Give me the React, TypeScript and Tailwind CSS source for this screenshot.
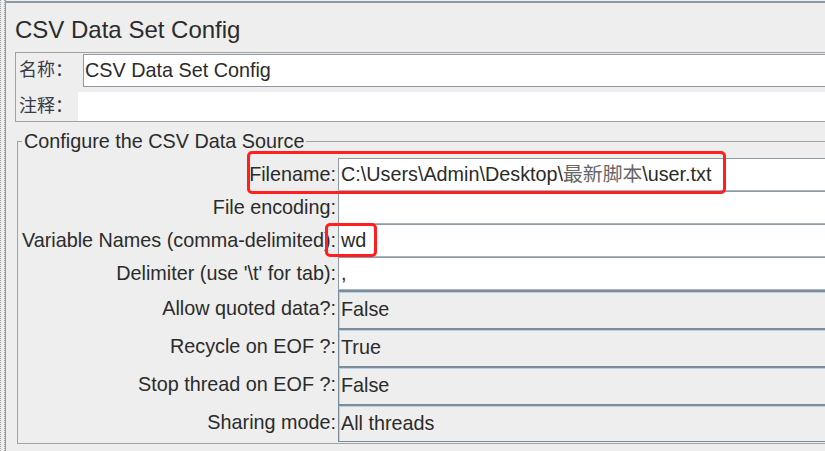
// CSV Data Set Config 패널 (JMeter 스타일)
const font = { fontFamily: '"Liberation Sans", "Noto Sans CJK SC", sans-serif' };

const textRows = [
  { label: "Filename:", value: "path" },
  { label: "File encoding:", value: "" },
  { label: "Variable Names (comma-delimited):", value: "wd" },
  { label: "Delimiter (use '\\t' for tab):", value: "," },
];

const comboRows = [
  { label: "Allow quoted data?:", value: "False" },
  { label: "Recycle on EOF ?:", value: "True" },
  { label: "Stop thread on EOF ?:", value: "False" },
  { label: "Sharing mode:", value: "All threads" },
];

export default function App() {
  return (
    <div className="relative flex w-[825px] h-[451px] overflow-hidden bg-[#eeeeee] text-[#2b2b2b]" style={font}>
      {/* 왼쪽 점선 스트립 */}
      <div className="w-[5px] shrink-0 border-x border-dotted border-[#a0a0a0]" />
      <div className="w-px shrink-0 bg-[#8d9aa6]" />

      <div className="flex-1 mt-px border-t-2 border-[#8d9aa6] pl-[9px]">
        {/* 제목 */}
        <div className="h-[49px] pt-[4px] flex items-center text-[24px]">CSV Data Set Config</div>

        {/* 이름 / 주석 */}
        <div className="-mr-[20px] border border-[#a0a0a0] pl-px">
          <div className="flex pt-px">
            <div className="w-[66px] shrink-0 pl-[2px] flex items-center text-[18px] text-[#3a3a4a] whitespace-nowrap">名称：</div>
            <div className="flex-1 h-[33px] bg-white border-t border-l border-b border-[#8d9aa6] pl-[1px] flex items-center text-[19.8px]">
              CSV Data Set Config
            </div>
          </div>
          <div className="flex mt-[5px]">
            <div className="w-[61px] shrink-0 pl-[2px] flex items-center text-[18px] text-[#3a3a4a] whitespace-nowrap">注释：</div>
            <div className="flex-1 h-[29px] bg-white" />
          </div>
        </div>

        {/* CSV 데이터 소스 */}
        <fieldset className="mt-[8px] ml-[2px] -mr-[20px] border border-[#a3a3a3] pb-px">
          <legend className="ml-[4px] px-[2px] text-[19.8px] leading-[23px]">Configure the CSV Data Source</legend>
          <div className="pt-[5px]">
            {textRows.map((r) => (
              <div key={r.label} className="flex h-[33px]">
                <div className="w-[320px] shrink-0 pr-[2px] flex items-center justify-end text-[19.8px] whitespace-nowrap">
                  {r.label}
                </div>
                <div className="flex-1 bg-white border-t border-l border-b border-t-[#8d9aa6] border-l-[#8d9aa6] border-b-[#a9b4bf] pl-[2px] flex items-center text-[19.8px] whitespace-nowrap">
                  {r.value === "path" ? (
                    <>
                      C:\Users\Admin\Desktop\<span className="text-[#666]">最新脚本</span>\user.txt
                    </>
                  ) : (
                    r.value
                  )}
                </div>
              </div>
            ))}
            {comboRows.map((r, i) => (
              <div key={r.label} className="flex h-[38px]">
                <div className="w-[320px] shrink-0 pr-[2px] flex items-center justify-end text-[19.8px] whitespace-nowrap">
                  {r.label}
                </div>
                <div
                  className={`flex-1 bg-[#eeeeee] border-t-2 border-l border-[#7d8c9b] shadow-[inset_1px_1px_0_#b8cfe5] pl-[2px] flex items-center text-[19.8px] ${
                    i === comboRows.length - 1 ? "border-b" : ""
                  }`}
                >
                  {r.value}
                </div>
              </div>
            ))}
          </div>
        </fieldset>
      </div>

      {/* 빨간 강조 박스 */}
      <div className="absolute left-[247px] top-[151px] w-[479px] h-[43px] border-[3px] border-[#ff1f1f] rounded-[5px]" />
      <div className="absolute left-[325px] top-[223px] w-[52px] h-[34px] border-[3px] border-[#ff1f1f] rounded-[5px]" />
    </div>
  );
}
